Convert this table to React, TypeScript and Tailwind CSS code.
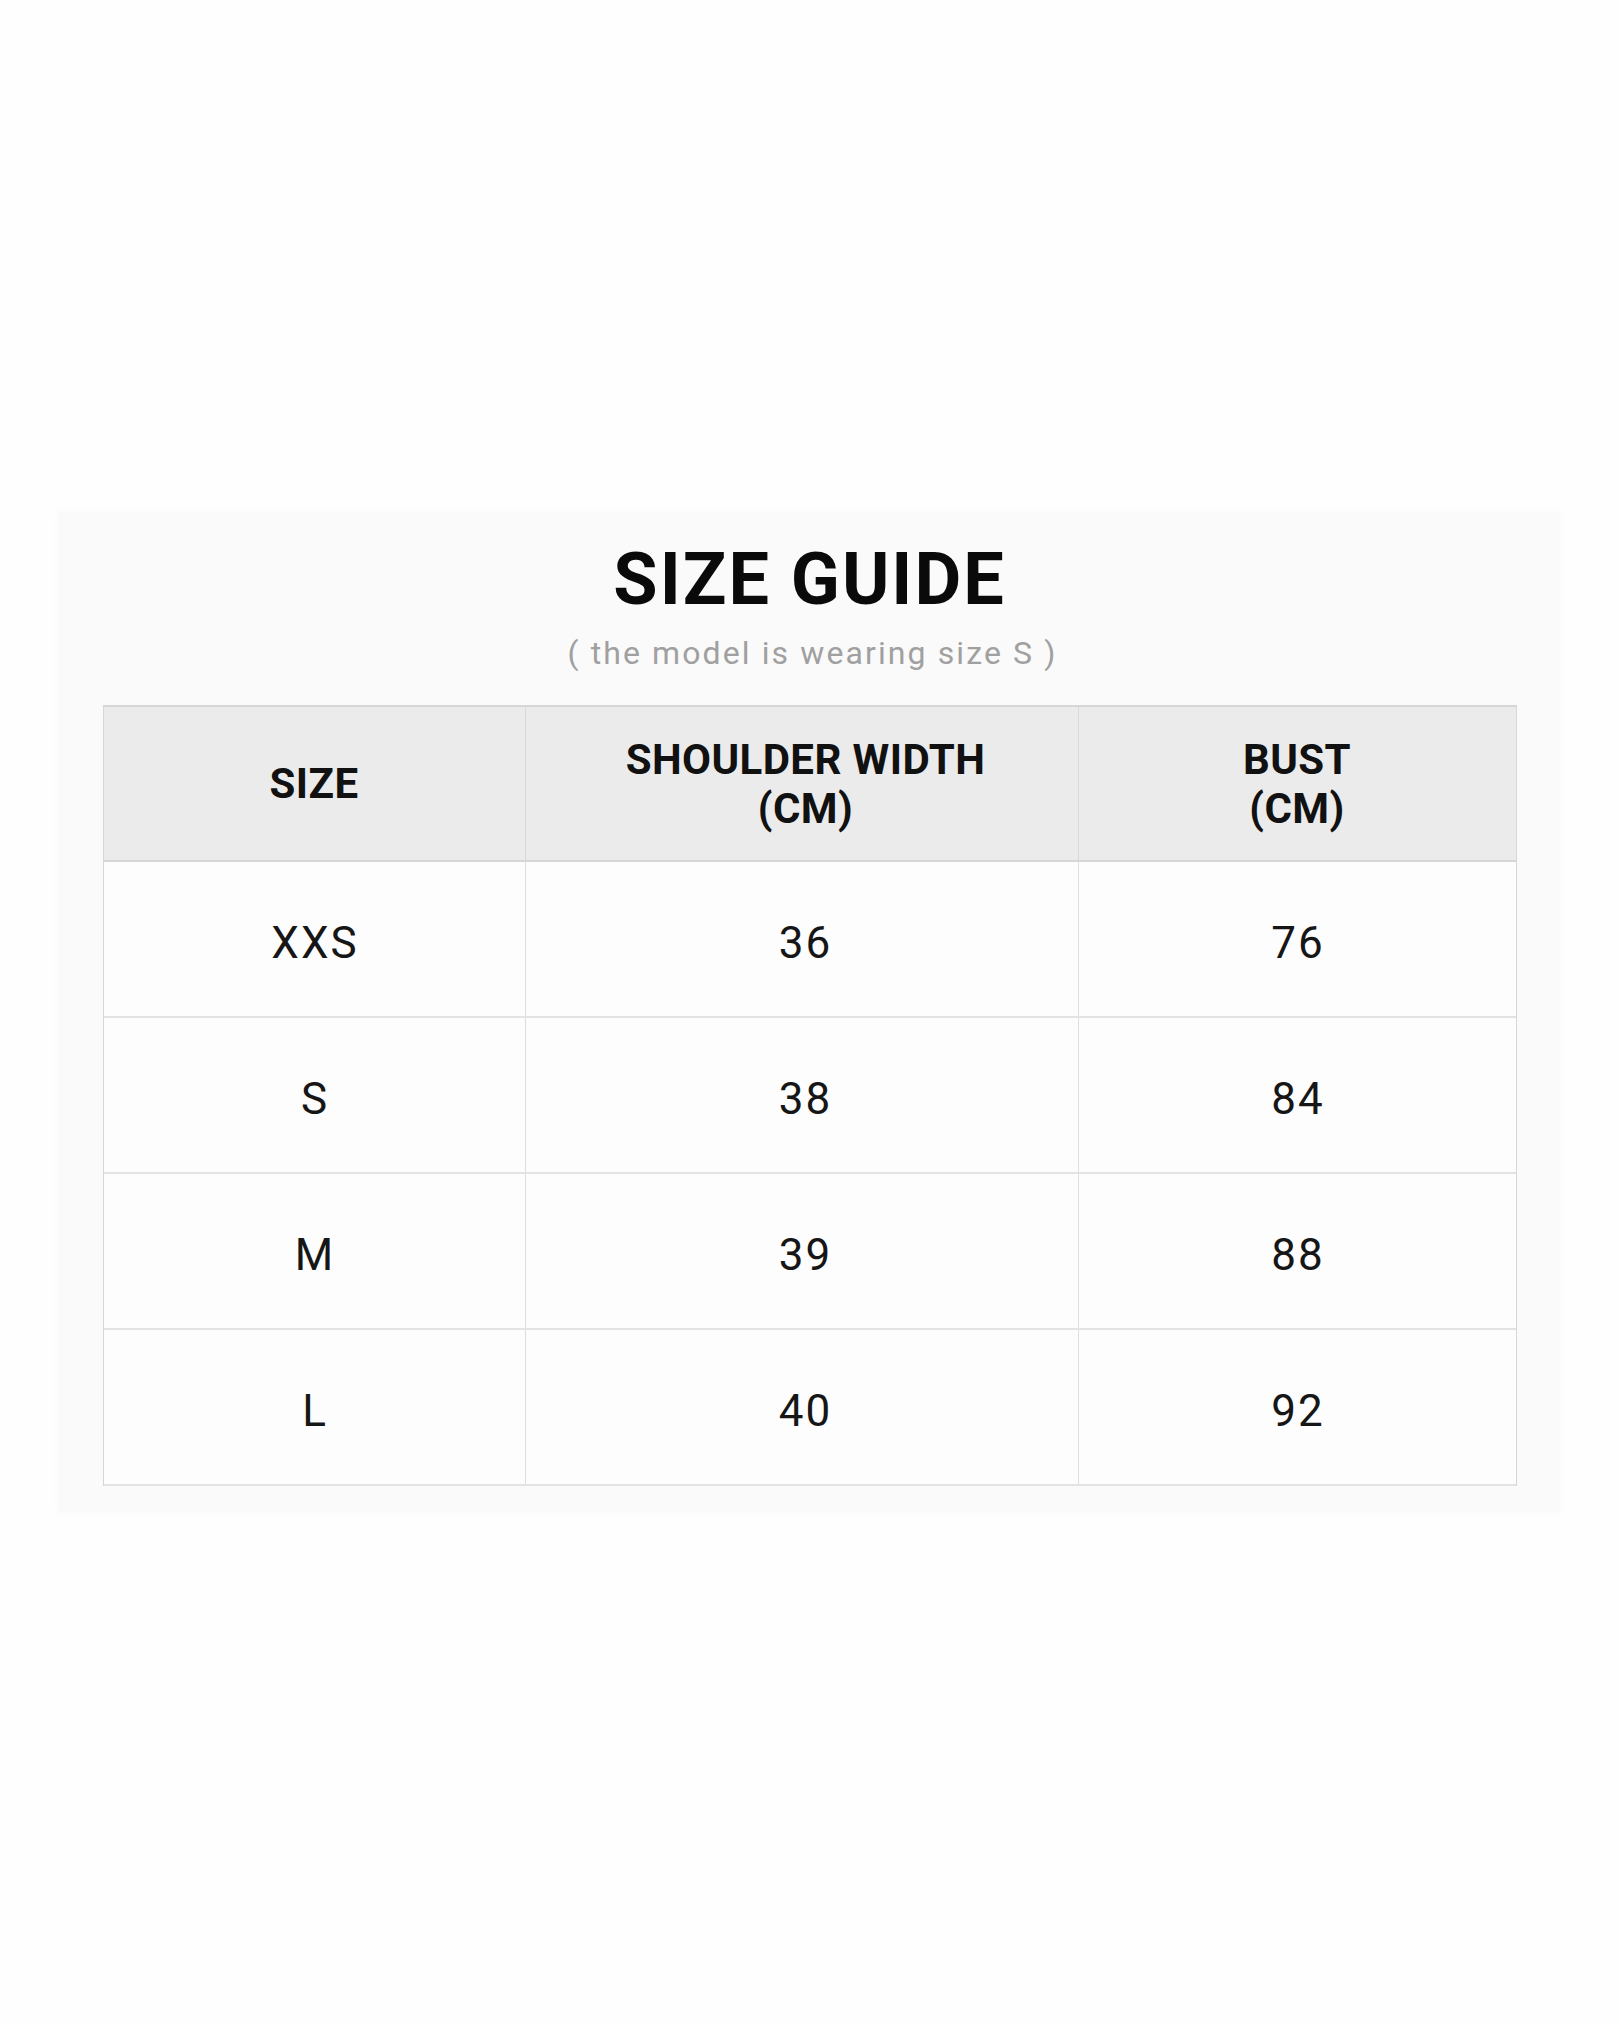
import React from "react";

const rows = [
  ["XXS", "36", "76"],
  ["S", "38", "84"],
  ["M", "39", "88"],
  ["L", "40", "92"],
];

export default function App() {
  return (
    <div
      className="min-h-[2025px] w-full bg-[#fefefe] pt-[512px]"
      style={{ fontFamily: "Roboto, 'Liberation Sans', Arial, sans-serif" }}
    >
      <div className="ml-[59px] w-[1501px] h-[1000px] bg-[#fafafa] pt-[32px] px-[44px] flex flex-col items-center shadow-[0_0_6px_2px_#fbfbfb]">
        <h1 className="text-[72px] leading-[72px] font-bold text-[#0a0a0a] tracking-[2px]">
          SIZE GUIDE
        </h1>
        <p className="mt-[21px] pl-[6px] text-[32px] leading-[32px] text-[#a0a0a0] tracking-[2.1px]">
          ( the model is wearing size S )
        </p>
        <div className="mt-[36px] w-[1414px] border-x border-[#d6d6d6] bg-[#fdfdfd]">
          <div className="grid grid-cols-[422px_553px_1fr] h-[157px] bg-[#ebebeb] border-y-2 border-[#d6d6d6] text-[#111] text-[42px] leading-[49px] font-bold text-center tracking-[0.4px]">
            <div className="flex items-center justify-center border-r border-[#d9d9d9]">SIZE</div>
            <div className="flex flex-col items-center justify-center pl-[8px] border-r border-[#d9d9d9]">
              <span>SHOULDER WIDTH</span>
              <span>(CM)</span>
            </div>
            <div className="flex flex-col items-center justify-center">
              <span>BUST</span>
              <span>(CM)</span>
            </div>
          </div>
          {rows.map((r, i) => (
            <div
              key={i}
              className="grid grid-cols-[422px_553px_1fr] h-[156px] border-b-2 border-[#e3e3e3] text-[#161616] text-[44px] leading-[44px] text-center tracking-[2px]"
            >
              <div className="flex items-center justify-center pt-[8px] pl-[2px] border-r border-[#dedede]">{r[0]}</div>
              <div className="flex items-center justify-center pt-[8px] pl-[8px] border-r border-[#dedede]">{r[1]}</div>
              <div className="flex items-center justify-center pt-[8px] pl-[2px]">{r[2]}</div>
            </div>
          ))}
        </div>
      </div>
    </div>
  );
}
